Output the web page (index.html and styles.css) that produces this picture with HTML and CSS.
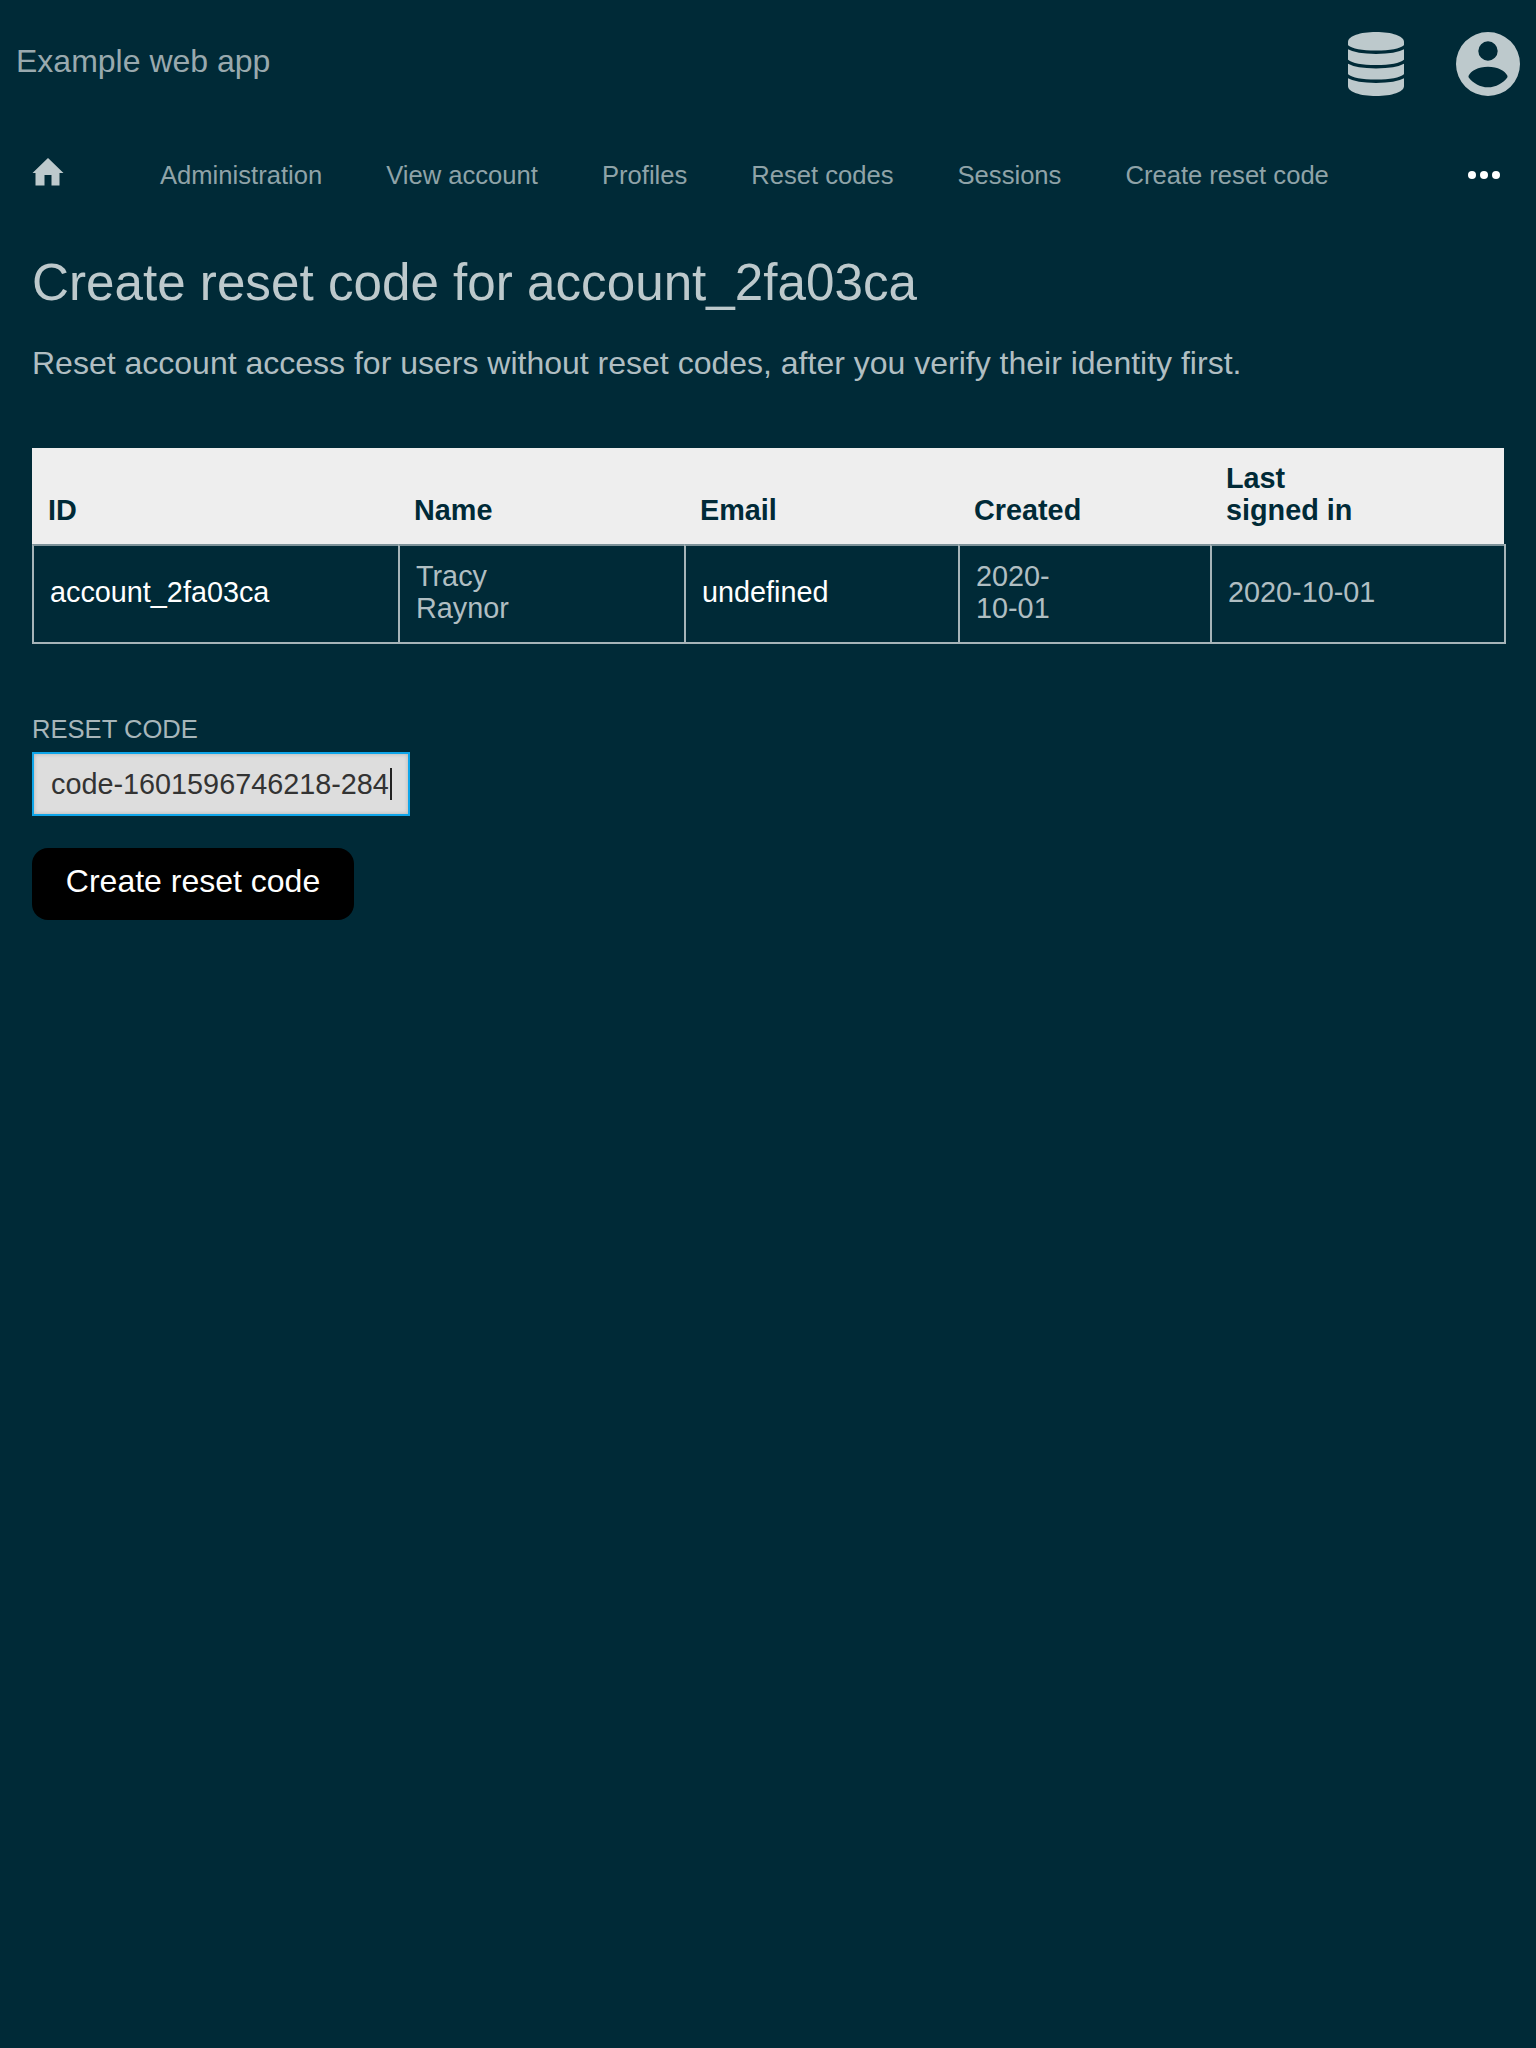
FILE: index.html
```html
<!DOCTYPE html>
<html lang="en">
<head>
<meta charset="utf-8">
<title>Example web app</title>
<link rel="stylesheet" href="styles.css">
</head>
<body>
<header class="topbar">
  <span class="brand">Example web app</span>
  <div class="top-icons">
    <svg class="db-icon" viewBox="0 0 56 64" aria-hidden="true"><path d="M0 10C0 4 12 0 28 0s28 4 28 10v44c0 6-12 10-28 10S0 60 0 54z"/><path class="db-band" d="M-1 14.500C8 22 48 22 57 14.500"/><path class="db-band" d="M-1 29C8 36.500 48 36.500 57 29"/><path class="db-band" d="M-1 43.500C8 51 48 51 57 43.500"/></svg>
    <svg class="user-icon" viewBox="0 0 64 64" aria-hidden="true"><path fill-rule="evenodd" d="M32 0a32 32 0 1 0 0 64 32 32 0 0 0 0-64zm0 9.300a9.700 9.700 0 1 1 0 19.400 9.700 9.700 0 0 1 0-19.400zM12.700 43.500c2-4.500 9.500-8.800 19.300-8.800s17.300 4.300 19.300 8.800c.3 1 .3 1.500-.2 2.200C47 51 40 55.300 32 55.300s-15-4.300-19.100-9.600c-.5-.7-.5-1.200-.2-2.200z"/></svg>
  </div>
</header>
<nav class="nav">
  <svg class="home-icon" viewBox="0 0 32 28" aria-hidden="true"><path d="M16 0 31.500 15h-4v12.500h-8V17h-7v10.500h-9V15h-3z"/></svg>
  <a class="nav-link">Administration</a>
  <a class="nav-link">View account</a>
  <a class="nav-link">Profiles</a>
  <a class="nav-link">Reset codes</a>
  <a class="nav-link">Sessions</a>
  <a class="nav-link">Create reset code</a>
  <span class="more"><i></i><i></i><i></i></span>
</nav>
<main class="content">
  <h1 class="title">Create reset code for account_2fa03ca</h1>
  <p class="lede">Reset account access for users without reset codes, after you verify their identity first.</p>
  <table class="data">
    <colgroup><col class="c1"><col class="c2"><col class="c3"><col class="c4"><col class="c5"></colgroup>
    <thead>
      <tr><th>ID</th><th>Name</th><th>Email</th><th>Created</th><th>Last<br>signed in</th></tr>
    </thead>
    <tbody>
      <tr><td class="bright">account_2fa03ca</td><td>Tracy<br>Raynor</td><td class="bright">undefined</td><td>2020-<br>10-01</td><td class="end">2020-10-01</td></tr>
    </tbody>
  </table>
  <form class="form">
    <label class="label">RESET CODE</label>
    <div class="field">code-1601596746218-284<span class="caret"></span></div>
    <button class="btn" type="button">Create reset code</button>
  </form>
</main>
</body>
</html>
```

FILE: styles.css
```css
* { box-sizing: border-box; }
html, body { margin: 0; padding: 0; }
body {
  background: #002a37;
  min-height: 2048px;
  font-family: "Liberation Sans", Arial, sans-serif;
  color: #bdc9cc;
}
.topbar {
  display: flex;
  justify-content: space-between;
  align-items: center;
  height: 128px;
  padding: 0 16px;
}
.brand { font-size: 32px; color: #99a9ae; position: relative; top: -3px; }
.top-icons { display: flex; align-items: center; gap: 52px; }
.db-icon, .user-icon { fill: #bdc9cc; display: block; }
.db-icon { width: 56px; height: 64px; }
.db-band { fill: none; stroke: #002a37; stroke-width: 3.5; }
.user-icon { width: 64px; height: 64px; }
.nav {
  display: flex;
  align-items: center;
  height: 94px;
  padding: 0 36px 0 32px;
  font-size: 25.6px;
}
.home-icon { width: 32px; height: 28px; fill: #bdc9cc; margin-right: 96px; position: relative; top: -3px; }
.nav-link { color: #8fa3a8; margin-right: 64px; }
.more { display: flex; gap: 4px; margin-left: auto; }
.more i { width: 8px; height: 8px; border-radius: 50%; background: #fff; }
.content { padding: 0 32px; }
.title { margin: 31px 0 0; font-size: 51.2px; line-height: 60px; font-weight: 400; color: #bdc9cc; }
.lede { margin: 30px 0 0; font-size: 32px; line-height: 40px; color: #b0bec2; }
.data { margin-top: 65px; border-collapse: separate; border-spacing: 0; table-layout: fixed; width: 1472px; font-size: 28.8px; line-height: 32px; }
.c1 { width: 366px; } .c2 { width: 286px; } .c3 { width: 274px; } .c4 { width: 252px; } .c5 { width: 294px; }
.data th { background: #eee; color: #002a37; text-align: left; vertical-align: bottom; padding: 14px 16px 18px; font-weight: 700; }
.data td {
  border-left: 2px solid #a6b4b8;
  border-top: 2px solid #7d9299;
  border-bottom: 2px solid #a6b4b8;
  padding: 14px 16px 18px;
  color: #b0bec2;
}
.data td.bright { color: #fff; }
.data td.end { box-shadow: 2px 0 0 #a6b4b8; }
.form { margin-top: 69px; }
.label { display: block; font-size: 25.6px; line-height: 32px; color: #a7b6ba; }
.field {
  width: 378px; height: 64px; margin-top: 7px;
  display: flex; align-items: center;
  padding: 0 0 0 17px;
  font-size: 28.8px; color: #333;
  background: #ddd;
  border: 2px solid #0ea5e9;
  box-shadow: inset 0 0 4px rgba(0,0,0,.2);
  white-space: nowrap;
}
.caret { flex: none; width: 2px; height: 32px; background: #222; margin-left: 1px; }
.btn {
  display: block;
  margin-top: 32px; height: 72px; width: 322px;
  background: #000; color: #fff;
  border: 0; border-radius: 16px;
  font: 32px "Liberation Sans", Arial, sans-serif;
  padding: 0 0 6px;
}
```
